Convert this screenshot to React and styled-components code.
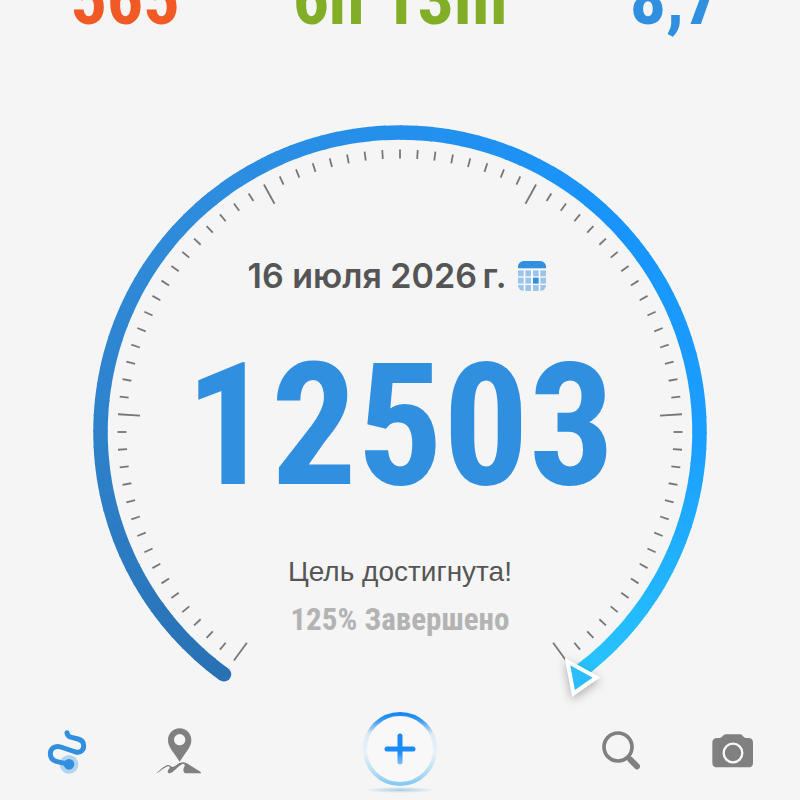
import React from "react";
import styled, { createGlobalStyle } from "styled-components";

const CENTER_X = 320;
const CENTER_Y = 312;
const SWEEP_START = -144;
const SWEEP_END = 144;
const TICK_COUNT = 80;
const SEGMENT_COUNT = 96;

const stats = [
    { label: "Калории", value: "565", color: "#f15a24" },
    { label: "Время", value: "6h 13m", color: "#82ad26" },
    { label: "Километры", value: "8,7", color: "#318fdf" },
];

// angle along the dial -> rgb
const arcStops = [
    [-144, [41, 113, 180]],
    [-90, [46, 130, 203]],
    [-45, [47, 140, 220]],
    [0, [36, 144, 236]],
    [45, [24, 148, 252]],
    [90, [27, 158, 255]],
    [120, [33, 180, 255]],
    [144, [41, 198, 255]],
];

const pointAt = (angle, radius) => {
    const rad = (angle * Math.PI) / 180;
    return [CENTER_X + radius * Math.sin(rad), CENTER_Y - radius * Math.cos(rad)];
};

const colorAt = (angle) => {
    const next = arcStops.findIndex(([stop]) => stop >= angle);
    if (next <= 0) return `rgb(${arcStops[0][1].join(",")})`;
    const [fromAngle, from] = arcStops[next - 1];
    const [toAngle, to] = arcStops[next];
    const t = (angle - fromAngle) / (toAngle - fromAngle);
    return `rgb(${from.map((c, i) => Math.round(c + (to[i] - c) * t)).join(",")})`;
};

const arcPath = (from, to, radius) => {
    const [x1, y1] = pointAt(from, radius);
    const [x2, y2] = pointAt(to, radius);
    return `M${x1} ${y1}A${radius} ${radius} 0 0 1 ${x2} ${y2}`;
};

const Dial = () => {
    const step = (SWEEP_END - SWEEP_START) / SEGMENT_COUNT;
    const tickStep = (SWEEP_END - SWEEP_START) / TICK_COUNT;
    const [capX, capY] = pointAt(SWEEP_START, 299.5);

    return (
        <DialSvg viewBox="0 0 640 590" aria-hidden="true">
            <circle cx={capX} cy={capY} r="7.25" fill={colorAt(SWEEP_START)} />
            {Array.from({ length: SEGMENT_COUNT }, (_, i) => {
                const from = SWEEP_START + i * step;
                const to = Math.min(from + step + 0.3, SWEEP_END);
                return (
                    <path
                        key={i}
                        d={arcPath(from, to, 299.5)}
                        fill="none"
                        stroke={colorAt(from + step / 2)}
                        strokeWidth="14.5"
                    />
                );
            })}
            {Array.from({ length: TICK_COUNT + 1 }, (_, i) => {
                const angle = SWEEP_START + i * tickStep;
                const [x1, y1] = pointAt(angle, 282.5);
                const [x2, y2] = pointAt(angle, i % 16 === 0 ? 260.5 : 273.5);
                return <line key={i} x1={x1} y1={y1} x2={x2} y2={y2} stroke="#777" strokeWidth="1.8" />;
            })}
            <Pointer d="M487.5 541.5L516.5 557.5L493.5 573.5Z" />
        </DialSvg>
    );
};

const CalendarIcon = () => (
    <svg width="28" height="30" viewBox="0 0 84 90" aria-hidden="true">
        <clipPath id="calendar-shape">
            <rect width="84" height="90" rx="17" />
        </clipPath>
        <g clipPath="url(#calendar-shape)">
            <rect width="84" height="90" fill="#fafcff" />
            <rect width="84" height="22" fill="#318fdf" />
            {[28, 50, 72].map((y) =>
                [0, 22, 45, 67].map((x) => (
                    <rect
                        key={`${x}-${y}`}
                        x={x}
                        y={y}
                        width="17"
                        height="18"
                        fill={x === 45 && y === 50 ? "#318fdf" : "#9cc4ea"}
                    />
                ))
            )}
        </g>
    </svg>
);

const TrackIcon = () => (
    <svg width="40" height="46" viewBox="51 54 120 138" aria-hidden="true">
        <circle cx="117" cy="163" r="28" fill="#b3d3f1" />
        <circle cx="117" cy="163" r="16" fill="#318fdf" />
        <path
            d="M111 68C112 77 118 81 128 83L144 87C155 90 161 97 161 107C161 121 151 129 137 126L92 111C76 106 61 115 61 131C61 144 68 151 79 154L116 163"
            fill="none"
            stroke="#318fdf"
            strokeWidth="15"
            strokeLinecap="round"
            strokeLinejoin="round"
        />
    </svg>
);

const PlaceIcon = () => (
    <svg width="46" height="46" viewBox="377 50 138 138" fill="#808080" aria-hidden="true">
        <path
            fillRule="evenodd"
            d="M448 51C428 51 413 66 413 87C413 105 426 119 437 135L448 151L459 135C470 119 483 105 483 87C483 66 468 51 448 51ZM448 68A17 17 0 1 1 448 102A17 17 0 1 1 448 68Z"
        />
        <path d="M378 185C388 178 397 166 410 162C416 160 420 163 425 167C433 168 438 160 447 155C458 150 465 153 473 158L510 181C513 184 513 186 510 186H465C457 183 458 173 463 164C464 159 460 157 455 159C445 164 438 174 430 179C425 184 421 187 414 185C409 181 415 174 418 169C418 165 414 164 410 166C399 170 390 180 378 186Z" />
    </svg>
);

const SearchIcon = () => (
    <svg width="40" height="40" viewBox="64 62 120 120" fill="none" stroke="#808080" aria-hidden="true">
        <circle cx="115" cy="110" r="42" strokeWidth="11" />
        <path d="M144 141L150 147" strokeWidth="10" />
        <path d="M152 148L172 168" strokeWidth="18" strokeLinecap="round" />
    </svg>
);

const CameraIcon = () => (
    <svg width="42" height="34" viewBox="396 68 126 102" aria-hidden="true">
        <path
            d="M412 80H419C427 80 429 69 438 69H480C489 69 489 80 498 80H505Q519 80 519 94V154Q519 168 505 168H412Q397 168 397 154V94Q397 80 412 80Z"
            fill="#808080"
        />
        <circle cx="459" cy="125" r="28" fill="#808080" stroke="#f8f8f8" strokeWidth="7" />
    </svg>
);

const AddIcon = () => (
    <AddSvg width="76" height="80" viewBox="0 0 76 80" aria-hidden="true">
        <defs>
            <linearGradient id="add-ring" x1="0" y1="0" x2="0" y2="1">
                <stop offset="0" stopColor="#1687f5" />
                <stop offset="0.1" stopColor="#3b9bf4" />
                <stop offset="0.28" stopColor="#dbe9f7" />
                <stop offset="0.55" stopColor="#e8f1f8" />
                <stop offset="0.82" stopColor="#b8def6" />
                <stop offset="1" stopColor="#86c9f4" />
            </linearGradient>
            <linearGradient id="add-plus" gradientUnits="userSpaceOnUse" x1="0" y1="22" x2="0" y2="54">
                <stop offset="0" stopColor="#1f86f5" />
                <stop offset="0.6" stopColor="#1a8cfb" />
                <stop offset="1" stopColor="#86c3fb" />
            </linearGradient>
            <radialGradient id="add-floor">
                <stop offset="0" stopColor="#76add8" stopOpacity="0.6" />
                <stop offset="1" stopColor="#76add8" stopOpacity="0" />
            </radialGradient>
        </defs>
        <ellipse cx="38" cy="79" rx="36" ry="3" fill="url(#add-floor)" />
        <AddRing cx="38" cy="38" r="35" />
        <path d="M38 25V51M25 38H51" fill="none" stroke="url(#add-plus)" strokeWidth="5" strokeLinecap="round" />
    </AddSvg>
);

const App = () => (
    <>
        <GlobalStyle />
        <Page>
            <Stats>
                {stats.map((stat) => (
                    <Stat key={stat.label} $color={stat.color} title={stat.label}>
                        {stat.value}
                    </Stat>
                ))}
            </Stats>
            <Gauge>
                <Dial />
                <Readout>
                    <DateRow>
                        <DateText>16 июля 2026{"\u2009"}г.</DateText>
                        <PlainButton type="button" aria-label="Выбрать дату">
                            <CalendarIcon />
                        </PlainButton>
                    </DateRow>
                    <Steps>12503</Steps>
                    <Goal>Цель достигнута!</Goal>
                    <Percent>125% Завершено</Percent>
                </Readout>
            </Gauge>
            <Nav>
                <NavGroup>
                    <NavButton type="button" aria-label="Активность">
                        <TrackIcon />
                    </NavButton>
                    <NavButton type="button" aria-label="Места">
                        <PlaceIcon />
                    </NavButton>
                </NavGroup>
                <PlainButton type="button" aria-label="Добавить">
                    <AddIcon />
                </PlainButton>
                <NavGroup>
                    <NavButton type="button" aria-label="Поиск">
                        <SearchIcon />
                    </NavButton>
                    <NavButton type="button" aria-label="Камера">
                        <CameraIcon />
                    </NavButton>
                </NavGroup>
            </Nav>
        </Page>
    </>
);

const GlobalStyle = createGlobalStyle`
    * {
        box-sizing: border-box;
    }

    body {
        margin: 0;
        background: #f5f5f5;
        font-family: "Liberation Sans", Arial, sans-serif;
    }
`;

const Page = styled.div`
    display: flex;
    flex-direction: column;
    min-height: 100vh;
    background: #f5f5f5;
`;

const Stats = styled.header`
    display: flex;
    align-items: flex-end;
    justify-content: space-between;
    height: 40px;
`;

const Stat = styled.div`
    width: 250px;
    color: ${({ $color }) => $color};
    font-family: "Roboto Condensed", "Arial Narrow", sans-serif;
    font-size: 72px;
    font-weight: 700;
    line-height: 80px;
    text-align: center;
    white-space: nowrap;
`;

const Gauge = styled.main`
    display: grid;
    justify-items: center;
    margin-top: 80px;

    > * {
        grid-area: 1 / 1;
    }
`;

const DialSvg = styled.svg`
    display: block;
    width: 100%;
    max-width: 640px;
`;

const Pointer = styled.path`
    fill: #2bbdfb;
    stroke: #fff;
    stroke-width: 4px;
    filter: drop-shadow(0 3px 5px rgba(0, 0, 0, 0.3));
`;

const Readout = styled.div`
    display: flex;
    flex-direction: column;
    align-items: center;
    padding-top: 136px;
    text-align: center;
`;

const DateRow = styled.div`
    display: flex;
    align-items: center;
    gap: 12px;
    height: 40px;
    padding-right: 6px;
`;

const DateText = styled.span`
    color: #555;
    font-family: Inter, sans-serif;
    font-size: 34px;
    font-weight: 600;
    line-height: 40px;
    white-space: nowrap;
`;

const Steps = styled.div`
    margin-top: 42px;
    color: #318fdf;
    font-family: "Roboto Condensed", "Arial Narrow", sans-serif;
    font-size: 170px;
    font-weight: 700;
    line-height: 176px;
`;

const Goal = styled.div`
    margin-top: 40px;
    color: #555;
    font-size: 28px;
    line-height: 36px;
`;

const Percent = styled.div`
    margin-top: 12px;
    color: #b3b3b3;
    font-family: "Roboto Condensed", "Arial Narrow", sans-serif;
    font-size: 31px;
    font-weight: 700;
    line-height: 36px;
`;

const Nav = styled.nav`
    display: flex;
    align-items: center;
    justify-content: space-between;
    height: 82px;
    padding: 0 11px;
`;

const NavGroup = styled.div`
    display: flex;
`;

const PlainButton = styled.button`
    display: flex;
    align-items: center;
    justify-content: center;
    padding: 0;
    border: 0;
    background: none;
    cursor: pointer;
`;

const NavButton = styled(PlainButton)`
    width: 112px;
    height: 80px;
`;

const AddSvg = styled.svg`
    overflow: visible;
`;

const AddRing = styled.circle`
    fill: #f8f8f8;
    stroke: url(#add-ring);
    stroke-width: 4px;
`;

export default App;
